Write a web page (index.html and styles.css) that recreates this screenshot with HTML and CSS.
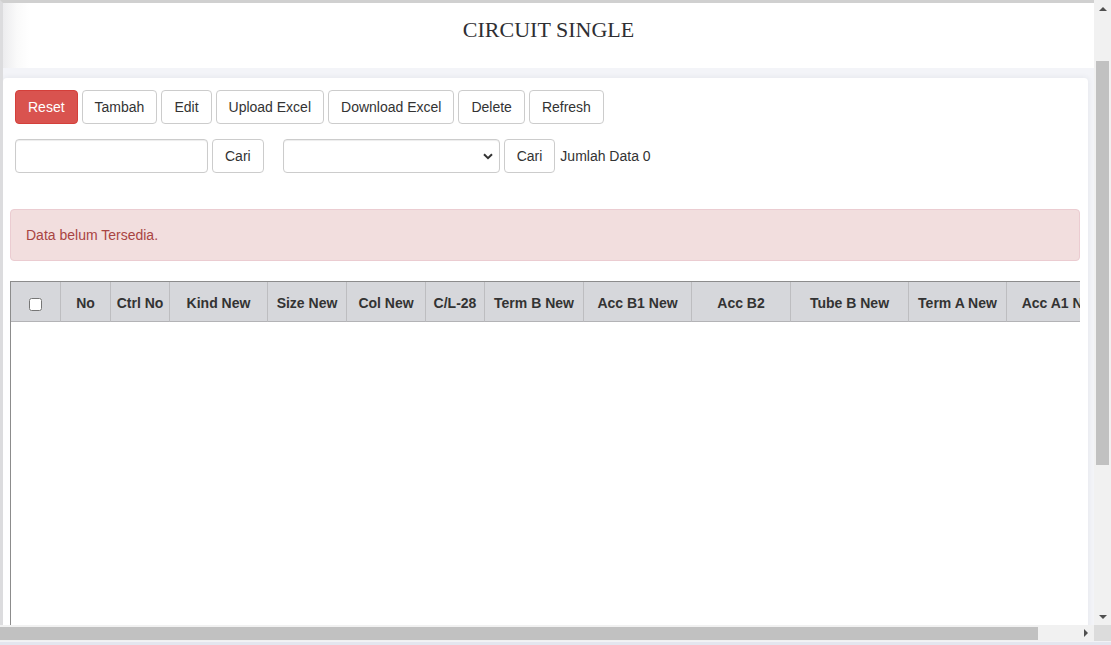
FILE: index.html
```html
<!DOCTYPE html>
<html lang="id">
<head>
<meta charset="utf-8">
<title>Circuit Single</title>
<link rel="stylesheet" href="styles.css">
</head>
<body>
<div class="screen">
  <div class="viewport">
    <div class="page">
      <header class="header">
        <h1 class="title">CIRCUIT SINGLE</h1>
      </header>
      <main class="card">
        <div class="toolbar">
          <button class="btn btn-danger">Reset</button>
          <button class="btn">Tambah</button>
          <button class="btn">Edit</button>
          <button class="btn">Upload Excel</button>
          <button class="btn">Download Excel</button>
          <button class="btn">Delete</button>
          <button class="btn">Refresh</button>
        </div>
        <div class="search-row">
          <input class="form-control search-input" type="text">
          <button class="btn">Cari</button>
          <div class="select-wrap">
            <select class="form-control select"><option></option></select>
            <svg class="chevron" width="10" height="7" viewBox="0 0 10 7"><path d="M1 1.2 L5 5.2 L9 1.2" fill="none" stroke="#333" stroke-width="2"/></svg>
          </div>
          <button class="btn">Cari</button>
          <span class="count">Jumlah Data 0</span>
        </div>
        <div class="alert">Data belum Tersedia.</div>
        <div class="table-wrap">
          <table class="grid">
            <colgroup>
              <col class="w50"><col class="w50"><col class="w59"><col class="w98"><col class="w79"><col class="w79"><col class="w59"><col class="w99"><col class="w108"><col class="w99"><col class="w118"><col class="w98"><col class="w110">
            </colgroup>
            <thead>
              <tr>
                <th><input type="checkbox" class="chk"></th>
                <th>No</th>
                <th>Ctrl No</th>
                <th>Kind New</th>
                <th>Size New</th>
                <th>Col New</th>
                <th>C/L-28</th>
                <th>Term B New</th>
                <th>Acc B1 New</th>
                <th>Acc B2</th>
                <th>Tube B New</th>
                <th>Term A New</th>
                <th>Acc A1 New</th>
              </tr>
            </thead>
          </table>
        </div>
      </main>
    </div>
    <div class="vscroll">
      <div class="arrow-box"><span class="tri tri-up"></span></div>
      <div class="vthumb"></div>
      <div class="vspace"></div>
      <div class="arrow-box"><span class="tri tri-down"></span></div>
    </div>
  </div>
  <div class="hscroll-row">
    <div class="hscroll">
      <div class="hthumb"></div>
      <div class="hspace"></div>
      <div class="arrow-box-h"><span class="tri tri-right"></span></div>
    </div>
    <div class="corner"></div>
  </div>
  <div class="bottom-strip"></div>
</div>
</body>
</html>
```

FILE: styles.css
```css
* { box-sizing: border-box; }
html, body { margin: 0; padding: 0; }
body {
  width: 1111px;
  height: 645px;
  overflow: hidden;
  font-family: "Liberation Sans", Arial, sans-serif;
  font-size: 14px;
  line-height: 1.42857;
  color: #333;
  background: #e6e8f0;
}
.screen {
  display: flex;
  flex-direction: column;
  width: 1111px;
  height: 645px;
}
.viewport {
  display: flex;
  height: 625px;
}
.page {
  flex: 1;
  overflow: hidden;
  background: #f3f4f8;
  border-top: 3px solid #d0d0d0;
  border-left: 3px solid #dcdcde;
}
.header {
  height: 65px;
  background: linear-gradient(to right, #ececee 0, #fafafa 14px, #fff 26px);
  padding-top: 14px;
  margin-left: -3px;
  border-left: 3px solid #e2e2e4;
}
.title {
  margin: 0;
  text-align: center;
  font-family: "Liberation Serif", "Times New Roman", serif;
  font-weight: normal;
  font-size: 22px;
  line-height: 26px;
  color: #2f2f33;
}
.card {
  margin-top: 10px;
  margin-right: 6px;
  background: #fff;
  border-radius: 4px;
  box-shadow: 0 0 6px rgba(40, 50, 80, 0.08);
  padding: 12px 8px 0 7px;
  height: 600px;
}
.toolbar {
  display: flex;
  gap: 4px;
  margin-left: 5px;
}
.btn {
  font-family: inherit;
  font-size: 14px;
  line-height: 20px;
  height: 34px;
  padding: 6px 12px;
  color: #333;
  background: #fff;
  border: 1px solid #ccc;
  border-radius: 4px;
  white-space: nowrap;
}
.btn-danger {
  color: #fff;
  background: #d9534f;
  border-color: #d43f3a;
}
.search-row {
  display: flex;
  align-items: center;
  gap: 4px;
  margin-top: 15px;
  margin-left: 5px;
}
.form-control {
  height: 34px;
  border: 1px solid #ccc;
  border-radius: 4px;
  box-shadow: inset 0 1px 1px rgba(0, 0, 0, 0.075);
  background: #fff;
  font-family: inherit;
  font-size: 14px;
  color: #555;
}
.search-input {
  width: 193px;
  padding: 6px 12px;
}
.select-wrap {
  position: relative;
  margin-left: 15px;
  display: flex;
}
.select {
  width: 217px;
  appearance: none;
  -webkit-appearance: none;
  padding: 6px 12px;
}
.chevron {
  position: absolute;
  right: 7px;
  top: 14px;
  pointer-events: none;
}
.count {
  margin-left: 1px;
  padding-top: 2px;
  color: #333;
}
.alert {
  margin-top: 36px;
  padding: 16px 15px 14px;
  background: #f2dede;
  border: 1px solid #ebccd1;
  border-radius: 4px;
  color: #a94442;
}
.table-wrap {
  margin-top: 20px;
  height: 400px;
  overflow: hidden;
  border-top: 1px solid #8c8c8c;
  border-left: 1px solid #8c8c8c;
}
.grid {
  table-layout: fixed;
  border-collapse: separate;
  border-spacing: 0;
  width: 1106px;
}
.w50 { width: 50px; }
.w59 { width: 59px; }
.w79 { width: 79px; }
.w98 { width: 98px; }
.w99 { width: 99px; }
.w108 { width: 108px; }
.w110 { width: 110px; }
.w118 { width: 118px; }
.grid th {
  height: 40px;
  padding: 12px 4px 6px;
  background: #d6d7db;
  border-right: 1px solid #bdbdc0;
  border-bottom: 1px solid #b3b3b6;
  font-weight: bold;
  font-size: 14px;
  color: #333;
  text-align: center;
  white-space: nowrap;
  overflow: hidden;
}
.chk {
  margin: 0;
  width: 13px;
  height: 13px;
  vertical-align: middle;
}
.vscroll {
  width: 17px;
  display: flex;
  flex-direction: column;
  align-items: center;
  background: #f1f1f1;
}
.arrow-box {
  height: 17px;
  width: 17px;
  display: flex;
  align-items: center;
  justify-content: center;
}
.vthumb {
  margin-top: 44px;
  width: 13px;
  height: 404px;
  background: #c1c1c1;
}
.vspace { flex: 1; }
.tri {
  width: 0;
  height: 0;
  display: block;
}
.tri-up {
  border-left: 4px solid transparent;
  border-right: 4px solid transparent;
  border-bottom: 4px solid #505050;
}
.tri-down {
  border-left: 4px solid transparent;
  border-right: 4px solid transparent;
  border-top: 4px solid #505050;
}
.tri-right {
  border-top: 4px solid transparent;
  border-bottom: 4px solid transparent;
  border-left: 4px solid #505050;
}
.hscroll-row {
  display: flex;
  height: 16px;
}
.hscroll {
  flex: 1;
  display: flex;
  align-items: center;
  background: #f1f1f1;
}
.hthumb {
  width: 1038px;
  height: 13px;
  background: #c1c1c1;
}
.hspace { flex: 1; }
.arrow-box-h {
  width: 17px;
  height: 16px;
  display: flex;
  align-items: center;
  justify-content: center;
}
.corner {
  width: 17px;
  background: #dcdcdc;
}
.bottom-strip {
  flex: 1;
  border-top: 1px solid #f3f3f6;
  background: #e4e6ef;
}
```
